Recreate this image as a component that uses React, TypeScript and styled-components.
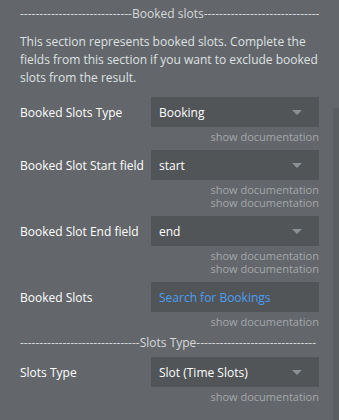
import React from "react";
import styled, { createGlobalStyle } from "styled-components";

const Global = createGlobalStyle`
  html, body {
    margin: 0;
    padding: 0;
    background: #63676b;
  }
  body {
    font-family: "Open Sans", "Liberation Sans", sans-serif;
    font-size: 12px;
  }
`;

const Panel = styled.div`
  position: relative;
  width: 339px;
  height: 420px;
  overflow: hidden;
  background: #63676b;
  box-sizing: border-box;
  padding: 5px 20px 0 20px;
`;

const Scrollbar = styled.div`
  position: absolute;
  right: 0;
  top: 108px;
  bottom: 0;
  width: 6px;
  background: #5a5e61;
`;

const Divider = styled.div`
  width: 299px;
  line-height: 18px;
  color: #d6d8da;
  white-space: nowrap;
  text-align: left;
`;

const Intro = styled.p`
  margin: 10px 0 10px 0;
  line-height: 18px;
  color: #dfe1e3;
`;

const Field = styled.div<{ $last?: boolean }>`
  display: flex;
  flex-direction: column;
  margin-bottom: ${(p) => (p.$last ? "6px" : "7px")};
`;

const Row = styled.div`
  display: flex;
  align-items: center;
  height: 30px;
`;

const Label = styled.div`
  width: 131px;
  color: #ffffff;
  white-space: nowrap;
`;

const Input = styled.div<{ $link?: boolean }>`
  flex: 1;
  height: 30px;
  display: flex;
  align-items: center;
  justify-content: space-between;
  box-sizing: border-box;
  padding: 0 17px 0 8px;
  background: #515558;
  color: ${(p) => (p.$link ? "#4d9ef0" : "#ffffff")};
`;

const Caret = styled.span`
  width: 0;
  height: 0;
  border-left: 5px solid transparent;
  border-right: 5px solid transparent;
  border-top: 5px solid #8b9094;
`;

const DocStack = styled.div`
  display: flex;
  flex-direction: column;
  padding-top: 3px;
`;

const Doc = styled.div`
  text-align: right;
  font-size: 11px;
  line-height: 13px;
  color: #a3a7ab;
`;

const Spacer = styled.div`
  height: 5px;
`;

type FieldProps = {
  label: string;
  value: string;
  docs: number;
  select?: boolean;
  link?: boolean;
  last?: boolean;
};

const FormField: React.FC<FieldProps> = ({ label, value, docs, select, link, last }) => (
  <Field $last={last}>
    <Row>
      <Label>{label}</Label>
      <Input $link={link}>
        <span>{value}</span>
        {select && <Caret />}
      </Input>
    </Row>
    <DocStack>
      {Array.from({ length: docs }).map((_, i) => (
        <Doc key={i}>show documentation</Doc>
      ))}
    </DocStack>
  </Field>
);

const d = (n: number) => "-".repeat(n);

export default function App() {
  return (
    <>
      <Global />
      <Panel>
        <Divider>
          {d(29)}Booked slots{d(30)}
        </Divider>
        <Intro>
          This section represents booked slots. Complete the fields from this section if you want
          to exclude booked slots from the result.
        </Intro>
        <FormField label="Booked Slots Type" value="Booking" docs={1} select />
        <FormField label="Booked Slot Start field" value="start" docs={2} select />
        <FormField label="Booked Slot End field" value="end" docs={2} select />
        <FormField label="Booked Slots" value="Search for Bookings" docs={1} link last />
        <Divider>
          {d(31)}Slots Type{d(31)}
        </Divider>
        <Spacer />
        <FormField label="Slots Type" value="Slot (Time Slots)" docs={1} select />
        <Scrollbar />
      </Panel>
    </>
  );
}
